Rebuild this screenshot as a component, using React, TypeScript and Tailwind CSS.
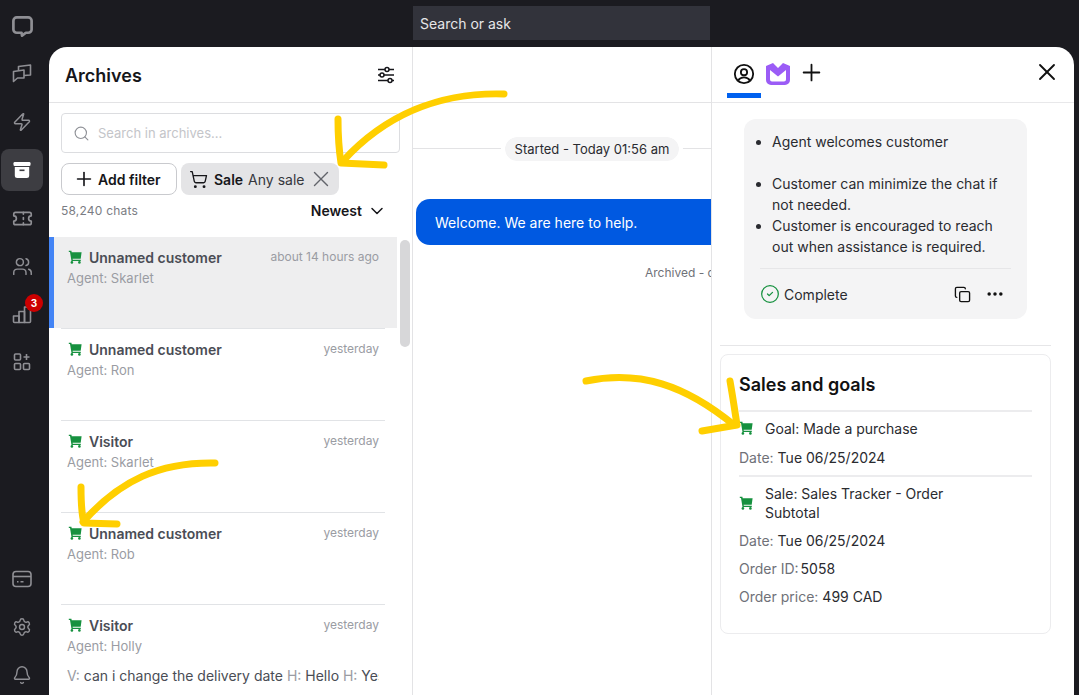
import { Plus, X, ChevronDown, Search, ShoppingCart, Copy, Ellipsis, CircleCheck, Zap, Ticket, Users, Settings, Bell } from 'lucide-react'

function GreenCart({ className = '' }: { className?: string }) {
  return (
    <svg viewBox="0 0 14 14" className={`w-[14px] h-[14px] shrink-0 ${className}`} fill="#16913f">
      <path d="M.8 .8h2.600l.3 1.400H13.600L12.700 8.800H4.600l.2 1h8v1.300H3.500L2 2.100H.8z" />
      <circle cx="3.900" cy="12.400" r="1.300" />
      <circle cx="11.400" cy="12.400" r="1.300" />
    </svg>
  )
}

function NavIcon({ children, active }: { children: React.ReactNode; active?: boolean }) {
  return (
    <div className={`w-[42px] h-[42px] rounded-lg flex items-center justify-center relative ${active ? 'bg-[#3d3d42] text-white' : 'text-[#8f8f94]'}`}>
      {children}
    </div>
  )
}

function Sidebar() {
  return (
    <div className="w-[49px] shrink-0 flex flex-col pl-[1px]">
      <div className="h-[47px] w-[42px] flex items-center justify-center pt-[5px] shrink-0">
        <svg viewBox="0 0 24 24" width="23" height="23" fill="none" stroke="#8f8f94" strokeWidth="2.800">
          <path d="M6 2.500h12A3.500 3.500 0 0 1 21.500 6v9a3.500 3.500 0 0 1-3.500 3.500h-2.500L11.500 21.500 11 18.500H6A3.500 3.500 0 0 1 2.500 15V6A3.500 3.500 0 0 1 6 2.500z" strokeLinejoin="round" />
        </svg>
      </div>
      <div className="flex flex-col gap-[6px] mt-[6px]">
        <NavIcon>
          <svg viewBox="0 0 20 20" width="20" height="20" fill="none" stroke="currentColor" strokeWidth="1.600" strokeLinejoin="round">
            <path d="M1.500 7.500 12 6v8H5.500l-4 3.500z" />
            <path d="M6.500 6.500v-4L18.500 1v10l-6.500.5" />
          </svg>
        </NavIcon>
        <NavIcon><Zap size={20} strokeWidth={1.8} /></NavIcon>
        <NavIcon active>
          <svg viewBox="0 0 20 20" width="20" height="20" fill="currentColor">
            <rect x="1.500" y="2" width="17" height="4" rx="1.200" />
            <path d="M2.800 7h14.400v8.500a2.500 2.500 0 0 1-2.500 2.500H5.300a2.500 2.500 0 0 1-2.500-2.500z" />
            <rect x="7.500" y="9.500" width="5" height="1.600" fill="#3d3d42" />
          </svg>
        </NavIcon>
        <NavIcon><Ticket size={21} strokeWidth={1.9} /></NavIcon>
        <NavIcon><Users size={21} strokeWidth={1.7} /></NavIcon>
        <NavIcon>
          <svg viewBox="0 0 20 20" width="20" height="20" fill="none" stroke="currentColor" strokeWidth="1.600" strokeLinejoin="round">
            <path d="M1.500 12h5.500v6.500H2.500a1 1 0 0 1-1-1z" />
            <path d="M7 7.500h5.500v11H7z" />
            <path d="M12.500 3h5a1 1 0 0 1 1 1v13.500a1 1 0 0 1-1 1h-5z" />
          </svg>
          <span className="absolute top-[1px] right-0 w-[18px] h-[18px] rounded-full bg-[#cc0000] text-white text-[10px] font-bold flex items-center justify-center">3</span>
        </NavIcon>
        <NavIcon>
          <svg viewBox="0 0 20 20" width="20" height="20" fill="none" stroke="currentColor" strokeWidth="1.600">
            <rect x="2.500" y="2" width="6" height="6" rx="1" />
            <rect x="2.500" y="11.500" width="6" height="6" rx="1" />
            <rect x="11.500" y="11.500" width="6" height="6" rx="1" />
            <path d="M14.500 2v6M11.500 5h6" />
          </svg>
        </NavIcon>
      </div>
      <div className="mt-auto flex flex-col gap-[6px] mb-[-1px]">
        <NavIcon>
          <svg viewBox="0 0 20 20" width="20" height="20" fill="none" stroke="currentColor" strokeWidth="1.600">
            <rect x="1" y="2.500" width="18" height="15" rx="3" />
            <path d="M1 7.500h18" />
            <path d="M5 12.800h1.500M8.500 12.800h3" />
          </svg>
        </NavIcon>
        <NavIcon><Settings size={20} strokeWidth={1.7} /></NavIcon>
        <NavIcon><Bell size={20} strokeWidth={1.7} /></NavIcon>
      </div>
    </div>
  )
}

const rows = [
  { name: 'Unnamed customer', agent: 'Skarlet', time: 'about 14 hours ago', active: true },
  { name: 'Unnamed customer', agent: 'Ron', time: 'yesterday' },
  { name: 'Visitor', agent: 'Skarlet', time: 'yesterday' },
  { name: 'Unnamed customer', agent: 'Rob', time: 'yesterday' },
  { name: 'Visitor', agent: 'Holly', time: 'yesterday', preview: true },
]

function ChatRow({ name, agent, time, active, preview }: { name: string; agent: string; time: string; active?: boolean; preview?: boolean }) {
  return (
    <div className={`shrink-0 ${active ? 'h-[91px] bg-[#eeeeef] border-l-[5px] border-[#4384f5] mr-[15px]' : 'h-[92px] mr-[27px]'}`}>
      <div className={`h-full pl-[7px] pr-[6px] ${active ? 'ml-[7px] mr-[12px] pt-[11px]' : 'ml-[12px] border-t border-[#e1e3e6] pt-[11px]'}`}>
        <div className="flex items-center h-[18px]">
          <GreenCart />
          <span className="ml-[7px] text-[14px] font-semibold text-[#4a4d55]">{name}</span>
          <span className="ml-auto text-[12px] text-[#9a9ca3]">{time}</span>
        </div>
        <div className="mt-[2px] text-[13px] leading-[20px] text-[#9a9ca3] -ml-[1px]">Agent: {agent}</div>
        {preview && (
          <div className="mt-[10px] text-[14px] leading-[20px] text-[#4a4d55] whitespace-nowrap overflow-hidden -ml-[1px]">
            <span className="text-[#9a9ca3]">V: </span>can i change the delivery date <span className="text-[#9a9ca3]">H: </span>Hello <span className="text-[#9a9ca3]">H: </span>Yes
          </div>
        )}
      </div>
    </div>
  )
}

function ArchiveList() {
  return (
    <div className="w-[364px] shrink-0 border-r border-[#e3e3e5] flex flex-col overflow-hidden relative">
      <div className="h-[56px] shrink-0 border-b border-[#e3e3e5] flex items-center justify-between pl-[16px] pr-[17px] pt-[1px]">
        <span className="text-[18px] font-semibold text-[#16161a]">Archives</span>
        <svg viewBox="0 0 18 18" width="18" height="18" fill="#fff" stroke="#16161a" strokeWidth="1.500">
          <path d="M1 3.500h16M1 9h16M1 14.500h16" />
          <circle cx="10" cy="3.500" r="2" />
          <circle cx="5" cy="9" r="2" />
          <circle cx="13" cy="14.500" r="2" />
        </svg>
      </div>
      <div className="px-[12px] pt-[10px]">
        <div className="h-[40px] w-[339px] border border-[#dcdde0] rounded flex items-center pl-[11px] pt-[1px]">
          <Search size={17} strokeWidth={1.6} className="text-[#8f9197]" />
          <span className="ml-[8px] text-[13px] text-[#c4c5c9]">Search in archives...</span>
        </div>
        <div className="flex gap-[4px] mt-[10px]">
          <div className="w-[116px] h-[32px] border border-[#c9cace] rounded-lg flex items-center pl-[11px] text-[14px] font-semibold text-[#16161a]">
            <Plus size={22} strokeWidth={1.8} />
            <span className="ml-[3px]">Add filter</span>
          </div>
          <div className="w-[158px] h-[32px] bg-[#e4e4e6] rounded-lg flex items-center pl-[8px] text-[14px] text-[#36373c]">
            <ShoppingCart size={19} strokeWidth={1.7} className="text-[#16161a]" />
            <span className="ml-[6px] font-semibold text-[#16161a]">Sale</span>
            <span className="ml-[5px]">Any sale</span>
            <X size={26} strokeWidth={1.3} className="ml-[4px] text-[#62646b]" />
          </div>
        </div>
        <div className="flex items-center h-[20px] mt-[6px]">
          <span className="text-[12px] text-[#7a7c83] tracking-[0.2px]">58,240 chats</span>
          <span className="ml-auto mb-[2px] text-[14px] font-semibold text-[#16161a]">Newest</span>
          <ChevronDown size={20} strokeWidth={1.8} className="ml-[5px] mr-[13px] mb-[1px] text-[#16161a]" />
        </div>
      </div>
      <div className="mt-[16px] flex flex-col">
        {rows.map((r, i) => <ChatRow key={i} {...r} />)}
      </div>
      <div className="absolute left-[351px] top-[193px] w-[10px] h-[107px] rounded-full bg-[#d7d7d9]" />
    </div>
  )
}

function ChatColumn() {
  return (
    <div className="w-[299px] shrink-0 border-r border-[#e3e3e5] overflow-hidden flex flex-col">
      <div className="h-[56px] shrink-0 border-b border-[#e3e3e5]" />
      <div className="relative h-[24px] mt-[34px] flex items-center justify-center shrink-0 pl-[60px]">
        <div className="absolute left-0 right-0 top-[11px] h-px bg-[#e3e3e5]" />
        <span className="relative z-10 outline outline-[4px] outline-white bg-[#f4f4f5] rounded-full px-[10px] h-[24px] leading-[24px] text-[13px] text-[#2a2b30]">Started - Today 01:56 am</span>
      </div>
      <div className="ml-[3px] mt-[38px] h-[46px] w-[340px] shrink-0 bg-[#0059e1] rounded-l-[14px] flex items-center pl-[19px] text-[14px] text-white">
        Welcome. We are here to help.
      </div>
      <div className="mt-[20px] ml-[232px] text-[12px] leading-[16px] text-[#6f7178] whitespace-nowrap">Archived - d</div>
    </div>
  )
}

function Line({ k, v, gap = 'ml-[4px]' }: { k: string; v: string; gap?: string }) {
  return (
    <div className="text-[14px] leading-[20px]">
      <span className="text-[#6f7178]">{k}</span>
      <span className={`${gap} text-[#2a2b30]`}>{v}</span>
    </div>
  )
}

function Details() {
  return (
    <div className="flex-1 min-w-0 flex flex-col overflow-hidden">
      <div className="h-[56px] shrink-0 border-b border-[#e8e8ea] flex">
        <div className="ml-[15px] w-[34px] h-[51px] border-b-[5px] border-[#0061ef] flex items-center justify-center pt-[7px]">
          <svg viewBox="0 0 24 24" width="22" height="22" fill="none" stroke="#111" strokeWidth="2">
            <circle cx="12" cy="12" r="10" />
            <circle cx="12" cy="10" r="3.400" />
            <path d="M5.500 19c1.400-2.300 3.600-3.400 6.500-3.400s5.100 1.100 6.500 3.400" />
          </svg>
        </div>
        <div className="ml-[5px] mt-[16px]">
          <svg viewBox="0 0 24 22" width="24" height="22" fill="#9b5cf6" fillRule="evenodd">
            <path d="M0 3 7 0l5 5 5-5 7 3v14a5 5 0 0 1-5 5H5a5 5 0 0 1-5-5zM4 7v9.500a2 2 0 0 0 2 2h12a2 2 0 0 0 2-2V7l-8 6.500z" />
          </svg>
        </div>
        <Plus size={27} strokeWidth={1.6} className="ml-[8px] mt-[12px] text-[#111]" />
        <X size={28} strokeWidth={1.6} className="ml-auto mr-[13px] mt-[11px] text-[#111]" />
      </div>
      <div className="ml-[32px] mt-[16px] w-[283px] h-[200px] shrink-0 rounded-xl bg-[#f4f4f5] px-[16px] pt-[12px]">
        <ul className="list-disc pl-[12px] text-[14px] leading-[21px] text-[#2a2b30] marker:text-[#2a2b30]">
          <li>Agent welcomes customer</li>
          <li className="mt-[21px]">Customer can minimize the chat if not needed.</li>
          <li>Customer is encouraged to reach out when assistance is required.</li>
        </ul>
        <div className="h-px bg-[#e6e6e8] mt-[11px]" />
        <div className="flex items-center h-[50px] text-[14px] text-[#2a2b30]">
          <CircleCheck size={20} strokeWidth={1.5} className="text-[#16913f]" />
          <span className="ml-[4px]">Complete</span>
          <Copy size={17} strokeWidth={1.9} className="ml-auto text-[#111]" />
          <Ellipsis size={20} strokeWidth={2.2} className="ml-[14px] mr-[6px] text-[#111]" />
        </div>
      </div>
      <div className="ml-[8px] mt-[26px] w-[331px] h-px shrink-0 bg-[#e6e6e8]" />
      <div className="ml-[8px] mt-[8px] w-[331px] h-[280px] shrink-0 border border-[#ececee] rounded-lg px-[18px]">
        <div className="h-[55px] pt-[4px] flex items-center text-[18px] font-semibold text-[#111]">Sales and goals</div>
        <div className="h-[2px] bg-[#ececee] w-[293px]" />
        <div className="flex items-center mt-[6px] h-[20px] text-[14px] text-[#2a2b30]">
          <GreenCart />
          <span className="ml-[12px]">Goal: Made a purchase</span>
        </div>
        <div className="mt-[10px]"><Line k="Date:" v="Tue 06/25/2024" /></div>
        <div className="h-[2px] bg-[#ececee] w-[293px] mt-[7px]" />
        <div className="flex items-center mt-[7px] text-[14px] leading-[19px] text-[#2a2b30]">
          <GreenCart />
          <span className="ml-[12px] w-[200px]">Sale: Sales Tracker - Order Subtotal</span>
        </div>
        <div className="mt-[9px]"><Line k="Date:" v="Tue 06/25/2024" /></div>
        <div className="mt-[8px]"><Line k="Order ID:" v="5058" gap="ml-[2px]" /></div>
        <div className="mt-[8px]"><Line k="Order price:" v="499 CAD" /></div>
      </div>
    </div>
  )
}

function Scribbles() {
  return (
    <svg className="absolute inset-0 pointer-events-none z-20" width="1079" height="695" fill="none" stroke="#ffcf00" strokeWidth="7" strokeLinecap="round" strokeLinejoin="round">
      <path d="M504 94C440 92 385 115 343 161" />
      <path d="M338 119C338 135 339 150 341 163L384 165" />
      <path d="M215 463C160 462 120 480 83 522" />
      <path d="M81 487C81 500 81 512 84 523L117 524" />
      <path d="M586 381C640 370 685 385 734 425" />
      <path d="M730 381C733 398 735 412 737 425L702 431" />
    </svg>
  )
}

export default function App() {
  return (
    <div className="relative w-[1079px] h-[695px] overflow-hidden bg-[#1b1b20] flex font-['Inter',sans-serif]">
      <Sidebar />
      <div className="flex-1 min-w-0 flex flex-col">
        <div className="h-[47px] shrink-0 pt-[6px]">
          <div className="ml-[364px] w-[297px] h-[34px] bg-[#32333b] flex items-center pl-[7px] text-[14px] text-[#e6e6e8]">Search or ask</div>
        </div>
        <div className="flex-1 min-h-0 mr-[5px] bg-white rounded-t-[18px] flex overflow-hidden">
          <ArchiveList />
          <ChatColumn />
          <Details />
        </div>
      </div>
      <Scribbles />
    </div>
  )
}
